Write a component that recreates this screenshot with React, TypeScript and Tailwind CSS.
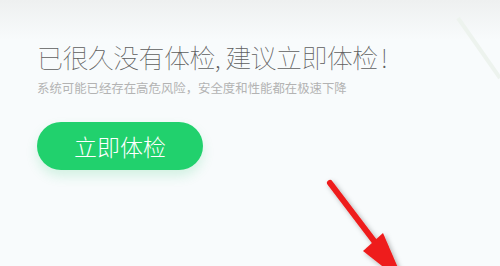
export default function App() {
  return (
    <div
      className="relative w-[500px] h-[266px] overflow-hidden bg-[#f8fbfc]"
      style={{ fontFamily: '"Noto Sans CJK SC", "Noto Sans", sans-serif' }}
    >
      <div className="absolute left-0 top-0 w-[500px] h-[40px] bg-gradient-to-b from-[#eef0f0] to-[#f8fbfc]" />
      <svg className="absolute left-0 top-0" width="500" height="266" viewBox="0 0 500 266">
        <path d="M458 18 L500 78" stroke="#edf3ee" strokeWidth="4" fill="none" />
      </svg>
      <div className="relative flex flex-col pl-[37px] pt-[42px]">
        <h1 className="text-[26px] leading-[30px] font-thin text-[#5e5e5e] tracking-[-0.6px] m-0">
          已很久没有体检,<span className="ml-[5px]">建议立即体检</span><span className="ml-[3px]">!</span>
        </h1>
        <p className="mt-[8px] text-[12.4px] leading-[16px] text-[#b3b3b3]">
          系统可能已经存在高危风险，安全度和性能都在极速下降
        </p>
        <div className="mt-[26px]">
          <button className="w-[166px] h-[48px] rounded-full bg-[#21d16d] text-white text-[23px] font-light flex items-center justify-center shadow-[0_6px_12px_rgba(40,200,110,0.18)]">
            立即体检
          </button>
        </div>
      </div>
      <svg className="absolute left-0 top-0" width="500" height="266" viewBox="0 0 500 266">
        <defs>
          <filter id="sh" x="-30%" y="-30%" width="160%" height="160%">
            <feDropShadow dx="2" dy="2" stdDeviation="2.5" floodColor="#000" floodOpacity="0.3" />
          </filter>
        </defs>
        <g filter="url(#sh)">
          <line x1="330" y1="183" x2="390" y2="262" stroke="#ee1c1c" strokeWidth="6" strokeLinecap="round" />
          <polygon points="363,251 383,233 405,284" fill="#ee1c1c" />
        </g>
      </svg>
    </div>
  );
}
